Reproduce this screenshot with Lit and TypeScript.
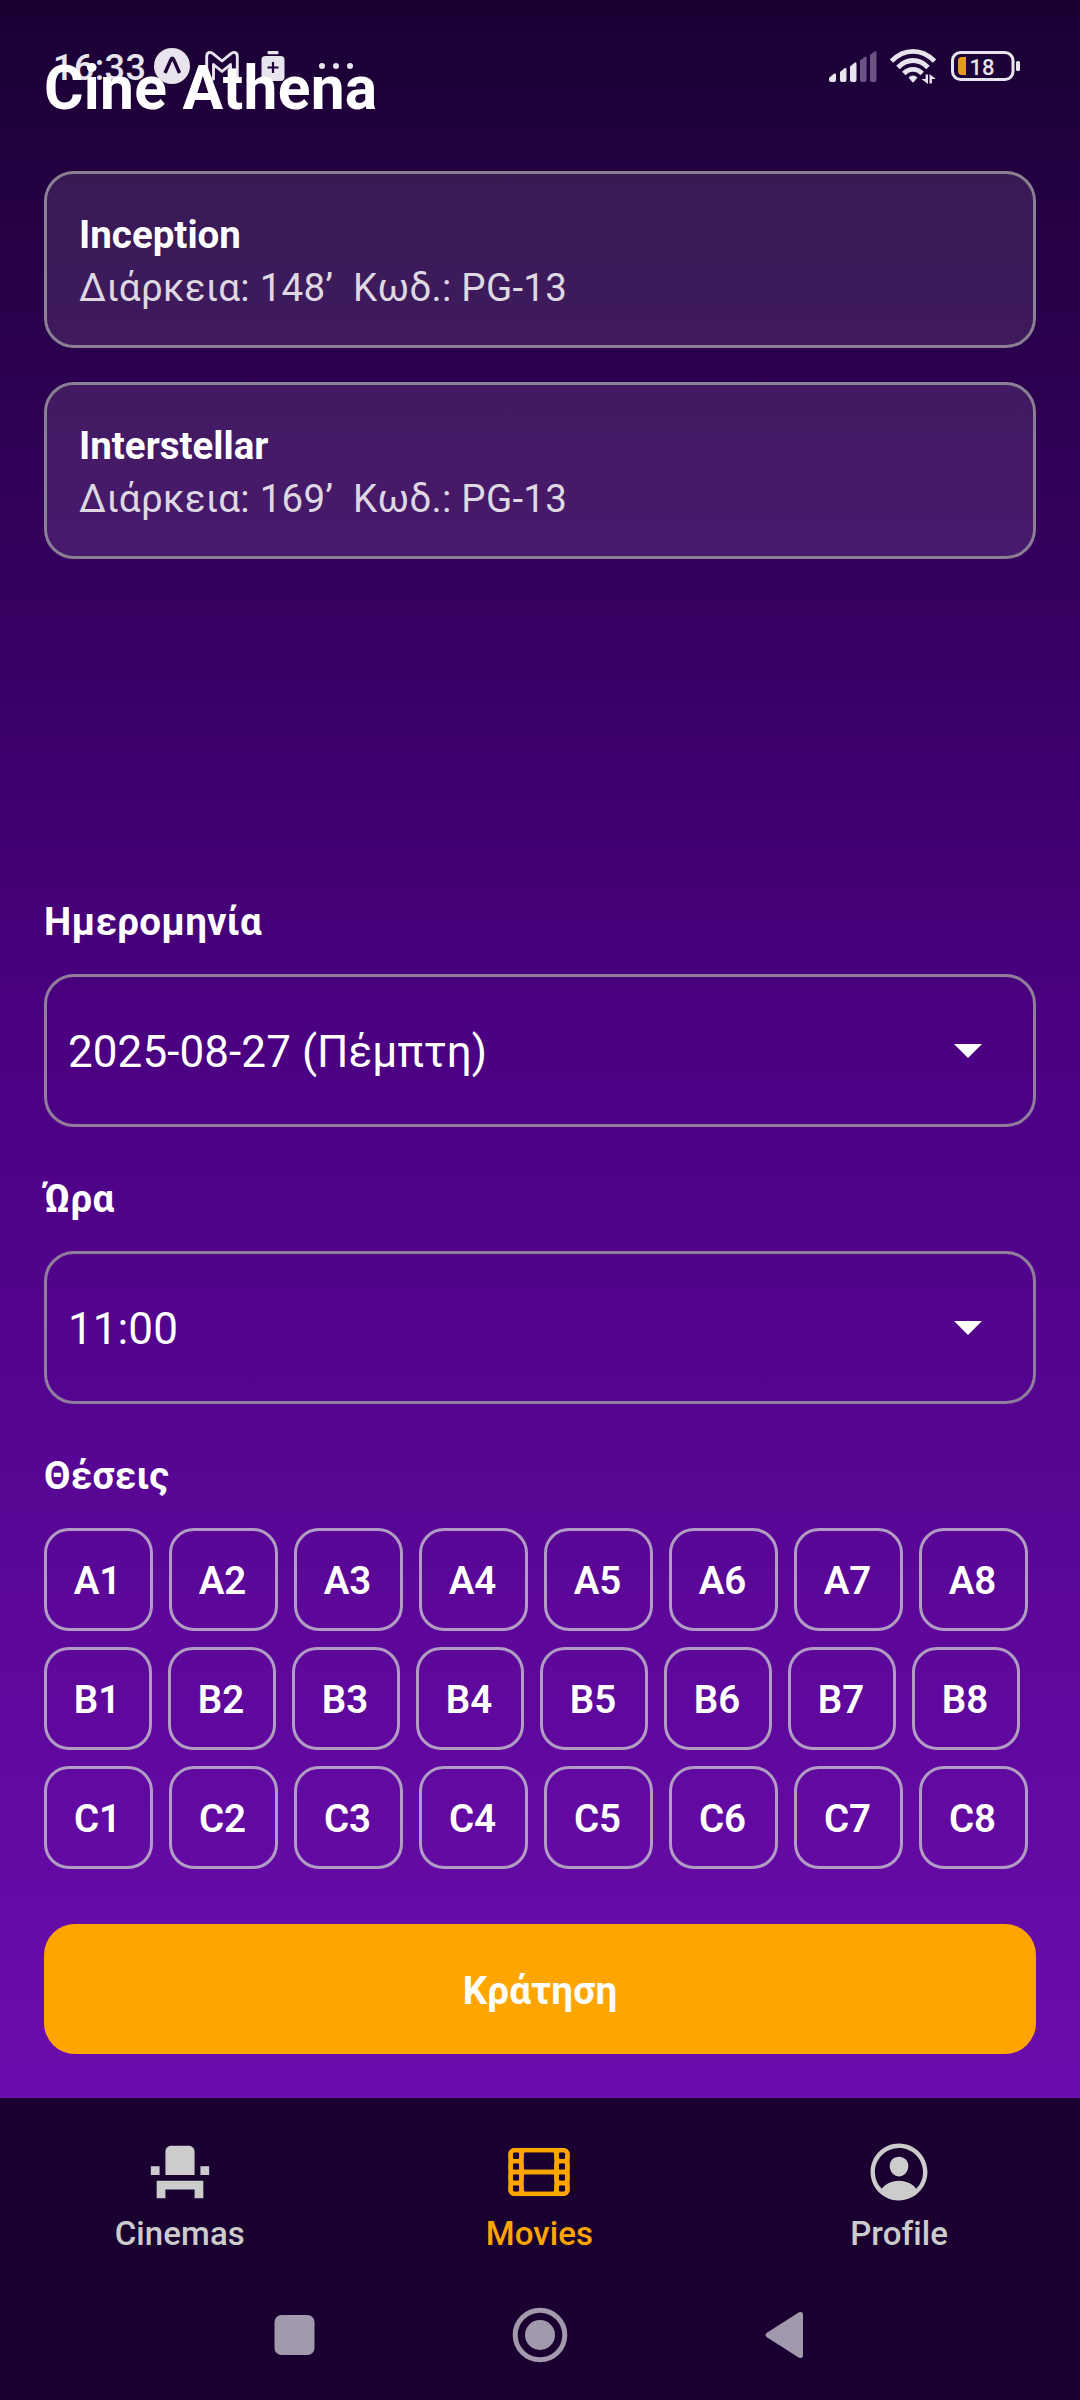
import { LitElement, html, svg, css } from "lit";
import { customElement, property, state } from "lit/decorators.js";
import { classMap } from "lit/directives/class-map.js";

interface Movie {
  title: string;
  minutes: number;
  rating: string;
}

const MOVIES: Movie[] = [
  { title: "Inception", minutes: 148, rating: "PG-13" },
  { title: "Interstellar", minutes: 169, rating: "PG-13" },
];

const ROWS = ["A", "B", "C"];
const SEATS = [1, 2, 3, 4, 5, 6, 7, 8];

@customElement("status-bar")
class StatusBar extends LitElement {
  static styles = css`
    :host {
      display: flex;
      align-items: center;
      justify-content: space-between;
      box-sizing: border-box;
      height: 132px;
      padding: 0 59px 0 53px;
      color: #e8e4ee;
      font-family: Roboto, sans-serif;
    }
    .group {
      display: flex;
      align-items: center;
    }
    .time {
      font-size: 36px;
      font-weight: 500;
      letter-spacing: 0.4px;
      line-height: 42px;
      width: 101px;
      padding-top: 4px;
    }
    svg {
      display: block;
      flex: none;
    }
    .expo { margin-right: 15px; }
    .mail { margin-right: 22px; }
    .saver { margin-right: 33px; }
    .signal { margin-right: 13px; }
    .wifi { margin-right: 15px; }
    .level {
      font-family: Roboto, sans-serif;
      font-size: 22px;
      font-weight: 500;
    }
  `;

  render() {
    return html`
      <div class="group">
        <span class="time">16:33</span>
        <svg class="expo" width="36" height="36" viewBox="0 0 36 36">
          <circle cx="18" cy="18" r="18" fill="#e8e4ee" />
          <path d="M11 25 17 11.5Q18.3 9 19.6 11.5L25.5 25" fill="none" stroke="#1f0038" stroke-width="3.4" stroke-linejoin="round" />
        </svg>
        <svg class="mail" width="34" height="32" viewBox="0 0 34 32">
          <path d="M1.7 27V6.5C1.7 2.6 5 1.2 8 3.6L17 11 26 3.6C29 1.2 32.3 2.6 32.3 6.5V27a2 2 0 0 1-2 2H25.5V14.5L17 21.5 8.5 14.5V29H3.7a2 2 0 0 1-2-2Z" fill="none" stroke="#e8e4ee" stroke-width="2.9" stroke-linejoin="round" />
        </svg>
        <svg class="saver" width="24" height="30" viewBox="0 0 24 30">
          <rect x="6.5" y="0" width="11" height="3.2" rx="1" fill="#e8e4ee" />
          <rect x="0.5" y="5" width="23" height="25" rx="4" fill="#e8e4ee" />
          <path d="M12 11v11M6.5 16.5h11" stroke="#1f0038" stroke-width="2.2" />
        </svg>
        <svg width="36" height="8" viewBox="0 0 36 8">
          <circle cx="4" cy="4" r="3" fill="#e8e4ee" />
          <circle cx="18" cy="4" r="3" fill="#e8e4ee" />
          <circle cx="32" cy="4" r="3" fill="#e8e4ee" />
        </svg>
      </div>
      <div class="group">
        <svg class="signal" width="48" height="31" viewBox="0 0 48 31">
          <path d="M0 29V27.5Q0 26.5 1 26L5 22.8Q7 21.5 7 24V29Q7 31 5 31H2Q0 31 0 29Z" fill="#e8e4ee" />
          <path d="M11 29V21L15.5 17.3Q17.5 16 17.5 18.5V29Q17.5 31 15.5 31H13Q11 31 11 29Z" fill="#e8e4ee" />
          <path d="M21 29V15.5L25.5 11.8Q27.5 10.5 27.5 13V29Q27.5 31 25.5 31H23Q21 31 21 29Z" fill="#e8e4ee" />
          <path d="M31 29V9.5L35.5 6Q37.5 4.8 37.5 7V29Q37.5 31 35.5 31H33Q31 31 31 29Z" fill="#6d5384" />
          <path d="M41 29V4L45.5 0.5Q47.5 -0.3 47.5 2V29Q47.5 31 45.5 31H43Q41 31 41 29Z" fill="#6d5384" />
        </svg>
        <svg class="wifi" width="46" height="36" viewBox="0 0 46 36">
          <g fill="none" stroke="#e8e4ee" stroke-width="4.8">
            <path d="M1.5 13.2Q11 3.4 23 3.4T44.5 13.2" />
            <path d="M8 19.5Q14.5 12.5 23 12.5T38 19.5" />
            <path d="M13.8 25.5Q17.8 21.3 23 21.3T32.2 25.5" />
          </g>
          <path d="M18.5 29.5Q23 25.6 27.5 29.5L24 33.8Q23 34.8 22 33.8Z" fill="#e8e4ee" />
          <path d="M35.6 26.5h2.4v9.500L31.500 31h4.100zM39.500 35.500v-9.500l6.300 5h-3.900v4.500z" fill="#e8e4ee" />
        </svg>
        <svg width="70" height="32" viewBox="0 0 70 32">
          <rect x="1.5" y="2.5" width="60.5" height="27" rx="8" fill="none" stroke="#e8e4ee" stroke-width="3" />
          <rect x="65" y="11" width="4" height="10" rx="1.6" fill="#e8e4ee" />
          <path d="M11 7h4v18h-4q-4 0-4-4V11q0-4 4-4Z" fill="#e39a26" />
          <text class="level" x="18.5" y="24.5" fill="#e8e4ee">18</text>
        </svg>
      </div>
    `;
  }
}

@customElement("movie-card")
class MovieCard extends LitElement {
  @property({ attribute: false }) movie!: Movie;

  static styles = css`
    :host {
      display: block;
      box-sizing: border-box;
      height: 177px;
      padding: 34px 32px;
      border: 3px solid #8b7f93;
      border-radius: 30px;
      background: rgba(255, 255, 255, 0.1);
      background-clip: padding-box;
      font-size: 38.5px;
      line-height: 53px;
    }
    .title {
      color: #fff;
      font-weight: 700;
    }
    .meta {
      color: #ddd8e1;
      letter-spacing: 0.27px;
      white-space: pre;
    }
  `;

  render() {
    return html`
      <div class="title">${this.movie.title}</div>
      <div class="meta">${`Διάρκεια: ${this.movie.minutes}’  Κωδ.: ${this.movie.rating}`}</div>
    `;
  }
}

@customElement("select-field")
class SelectField extends LitElement {
  @property() label = "";
  @property() value = "";

  static styles = css`
    :host {
      display: block;
    }
    .label {
      margin-bottom: 26px;
      font-size: 38.5px;
      font-weight: 700;
      letter-spacing: 0.25px;
      line-height: 53px;
    }
    .box {
      display: flex;
      align-items: center;
      justify-content: space-between;
      box-sizing: border-box;
      height: 153px;
      padding: 0 51px 0 21px;
      border: 3px solid #8f7d9b;
      border-radius: 30px;
    }
    .value {
      padding-top: 3px;
      font-size: 44px;
      letter-spacing: 0.08px;
      line-height: 52px;
    }
    svg {
      display: block;
    }
  `;

  render() {
    return html`
      <div class="label">${this.label}</div>
      <div class="box">
        <span class="value">${this.value}</span>
        <svg width="28" height="14" viewBox="0 0 28 14"><path d="M0 0h28L14 14Z" fill="#fff" /></svg>
      </div>
    `;
  }
}

@customElement("seat-map")
class SeatMap extends LitElement {
  static styles = css`
    :host {
      display: block;
    }
    .label {
      margin-bottom: 26px;
      font-size: 38.5px;
      font-weight: 700;
      letter-spacing: 0.25px;
      line-height: 53px;
    }
    .rows {
      display: flex;
      flex-direction: column;
      gap: 16px;
    }
    .row {
      display: flex;
      gap: 16px;
    }
    .seat {
      display: flex;
      align-items: center;
      justify-content: center;
      box-sizing: border-box;
      width: 109px;
      height: 103px;
      padding: 2px 2px 0 0;
      border: 3px solid #b19cc3;
      border-radius: 25px;
      font-size: 38.5px;
      font-weight: 600;
      line-height: 45px;
    }
    .narrow {
      width: 108px;
    }
  `;

  render() {
    return html`
      <div class="label">Θέσεις</div>
      <div class="rows">
        ${ROWS.map(
          (row) => html`<div class="row">
            ${SEATS.map((n) => html`<div class=${classMap({ seat: true, narrow: row === "B" })}>${row}${n}</div>`)}
          </div>`
        )}
      </div>
    `;
  }
}

const SEAT_ICON = svg`<svg width="70" height="70" viewBox="0 0 24 24"><path fill="currentColor" d="M4 18v3h3v-3h10v3h3v-6H4zm15-8h3v3h-3zM2 10h3v3H2zm15 3H7V5c0-1.1.9-2 2-2h6c1.1 0 2 .9 2 2v8z"/></svg>`;

const FILM_ICON = svg`<svg width="70" height="70" viewBox="0 0 512 512"><g fill="none" stroke="currentColor" stroke-width="32" stroke-linejoin="round">
  <rect x="48" y="96" width="416" height="320" rx="28"/>
  ${[48, 384].map((x) => [96, 176, 256, 336].map((y) => svg`<rect x=${x} y=${y} width="80" height="80" rx="28"/>`))}
  <rect x="128" y="96" width="256" height="160" rx="28"/>
  <rect x="128" y="256" width="256" height="160" rx="28"/>
</g></svg>`;

const PROFILE_ICON = svg`<svg width="70" height="70" viewBox="0 0 512 512"><g fill="currentColor">
  <path d="M258.9 48C141.92 46.42 46.42 141.92 48 258.9c1.56 112.19 92.91 203.54 205.1 205.1 117 1.6 212.48-93.9 210.88-210.88C462.44 140.91 371.09 49.56 258.9 48zm126.42 327.25a4 4 0 01-6.14-.32 124.27 124.27 0 00-32.35-29.59C321.37 329 289.11 320 256 320s-65.37 9-90.83 25.34a124.24 124.24 0 00-32.35 29.58 4 4 0 01-6.14.32A175.32 175.32 0 0180 259c-1.63-97.31 78.22-178.76 175.56-179S432 158.81 432 256a175.32 175.32 0 01-46.68 119.25z"/>
  <path d="M256 144c-19.72 0-37.55 7.39-50.22 20.82s-19 32-17.57 51.93C191.11 256 221.52 288 256 288s64.83-32 67.79-71.24c1.48-19.74-4.8-38.14-17.68-51.82C293.39 151.44 275.59 144 256 144z"/>
</g></svg>`;

const TABS = [
  { name: "Cinemas", icon: SEAT_ICON },
  { name: "Movies", icon: FILM_ICON },
  { name: "Profile", icon: PROFILE_ICON },
];

@customElement("tab-bar")
class TabBar extends LitElement {
  @property() active = "";

  static styles = css`
    :host {
      display: grid;
      grid-template-columns: repeat(3, 1fr);
      height: 172px;
      padding: 39px 1px 0 0;
      box-sizing: border-box;
    }
    .tab {
      display: flex;
      flex-direction: column;
      align-items: center;
      gap: 7px;
      color: #ccc;
      font-size: 33px;
      font-weight: 500;
      letter-spacing: 0.1px;
      line-height: 39px;
    }
    .active {
      color: #ffa500;
    }
    svg {
      display: block;
    }
  `;

  render() {
    return TABS.map(
      (tab) => html`<div class=${classMap({ tab: true, active: tab.name === this.active })}>
        ${tab.icon}<span>${tab.name}</span>
      </div>`
    );
  }
}

@customElement("system-nav")
class SystemNav extends LitElement {
  static styles = css`
    :host {
      display: flex;
      align-items: center;
      justify-content: space-between;
      box-sizing: border-box;
      height: 130px;
      padding: 0 276px 0 274px;
    }
    svg {
      display: block;
      fill: #a299ac;
    }
  `;

  render() {
    return html`
      <svg width="41" height="56" viewBox="0 0 41 56"><rect x="0.5" y="8" width="40" height="40" rx="7" /></svg>
      <svg width="56" height="56" viewBox="0 0 56 56">
        <circle cx="28" cy="28" r="24.8" fill="none" stroke="#a299ac" stroke-width="5" />
        <circle cx="28" cy="28" r="15" />
      </svg>
      <svg width="39" height="56" viewBox="0 0 39 56"><path d="M1.5 26 34 5.3Q37.5 4 38 7V49Q37.5 52 34 50.7L1.5 30Q-0.5 28 1.5 26Z" /></svg>
    `;
  }
}

@customElement("app-root")
class AppRoot extends LitElement {
  @state() private date = "2025-08-27 (Πέμπτη)";
  @state() private time = "11:00";

  static styles = css`
    :host {
      display: flex;
      flex-direction: column;
      position: relative;
      width: 1080px;
      height: 2400px;
      overflow: hidden;
      background: #1a0030;
      color: #fff;
      font-family: Roboto, "Noto Sans", sans-serif;
    }
    .status {
      position: absolute;
      inset: 0 0 auto 0;
    }
    .screen {
      display: flex;
      flex-direction: column;
      box-sizing: border-box;
      height: 2098px;
      padding: 53px 44px 44px;
      background: linear-gradient(#1a0033, #4b0082 50%, #6a0dad);
    }
    .heading {
      position: relative;
      margin: 0 0 47px;
      font-size: 60.5px;
      font-weight: 700;
      letter-spacing: 0.25px;
      line-height: 71px;
    }
    .movies {
      display: flex;
      flex: 1;
      flex-direction: column;
      gap: 34px;
    }
    .form {
      display: flex;
      flex-direction: column;
      gap: 45px;
    }
    .book {
      margin-top: 10px;
      height: 130px;
      padding: 2px 0 0;
      border: none;
      border-radius: 31px;
      background: #ffa500;
      color: #fff;
      font: 700 38.5px/45px Roboto, "Noto Sans", sans-serif;
      letter-spacing: 0.2px;
    }
  `;

  render() {
    return html`
      <div class="screen">
        <status-bar class="status"></status-bar>
        <h1 class="heading">Cine Athena</h1>
        <div class="movies">${MOVIES.map((movie) => html`<movie-card .movie=${movie}></movie-card>`)}</div>
        <div class="form">
          <select-field label="Ημερομηνία" .value=${this.date}></select-field>
          <select-field label="Ώρα" .value=${this.time}></select-field>
          <seat-map></seat-map>
          <button class="book">Κράτηση</button>
        </div>
      </div>
      <tab-bar active="Movies"></tab-bar>
      <system-nav></system-nav>
    `;
  }
}
